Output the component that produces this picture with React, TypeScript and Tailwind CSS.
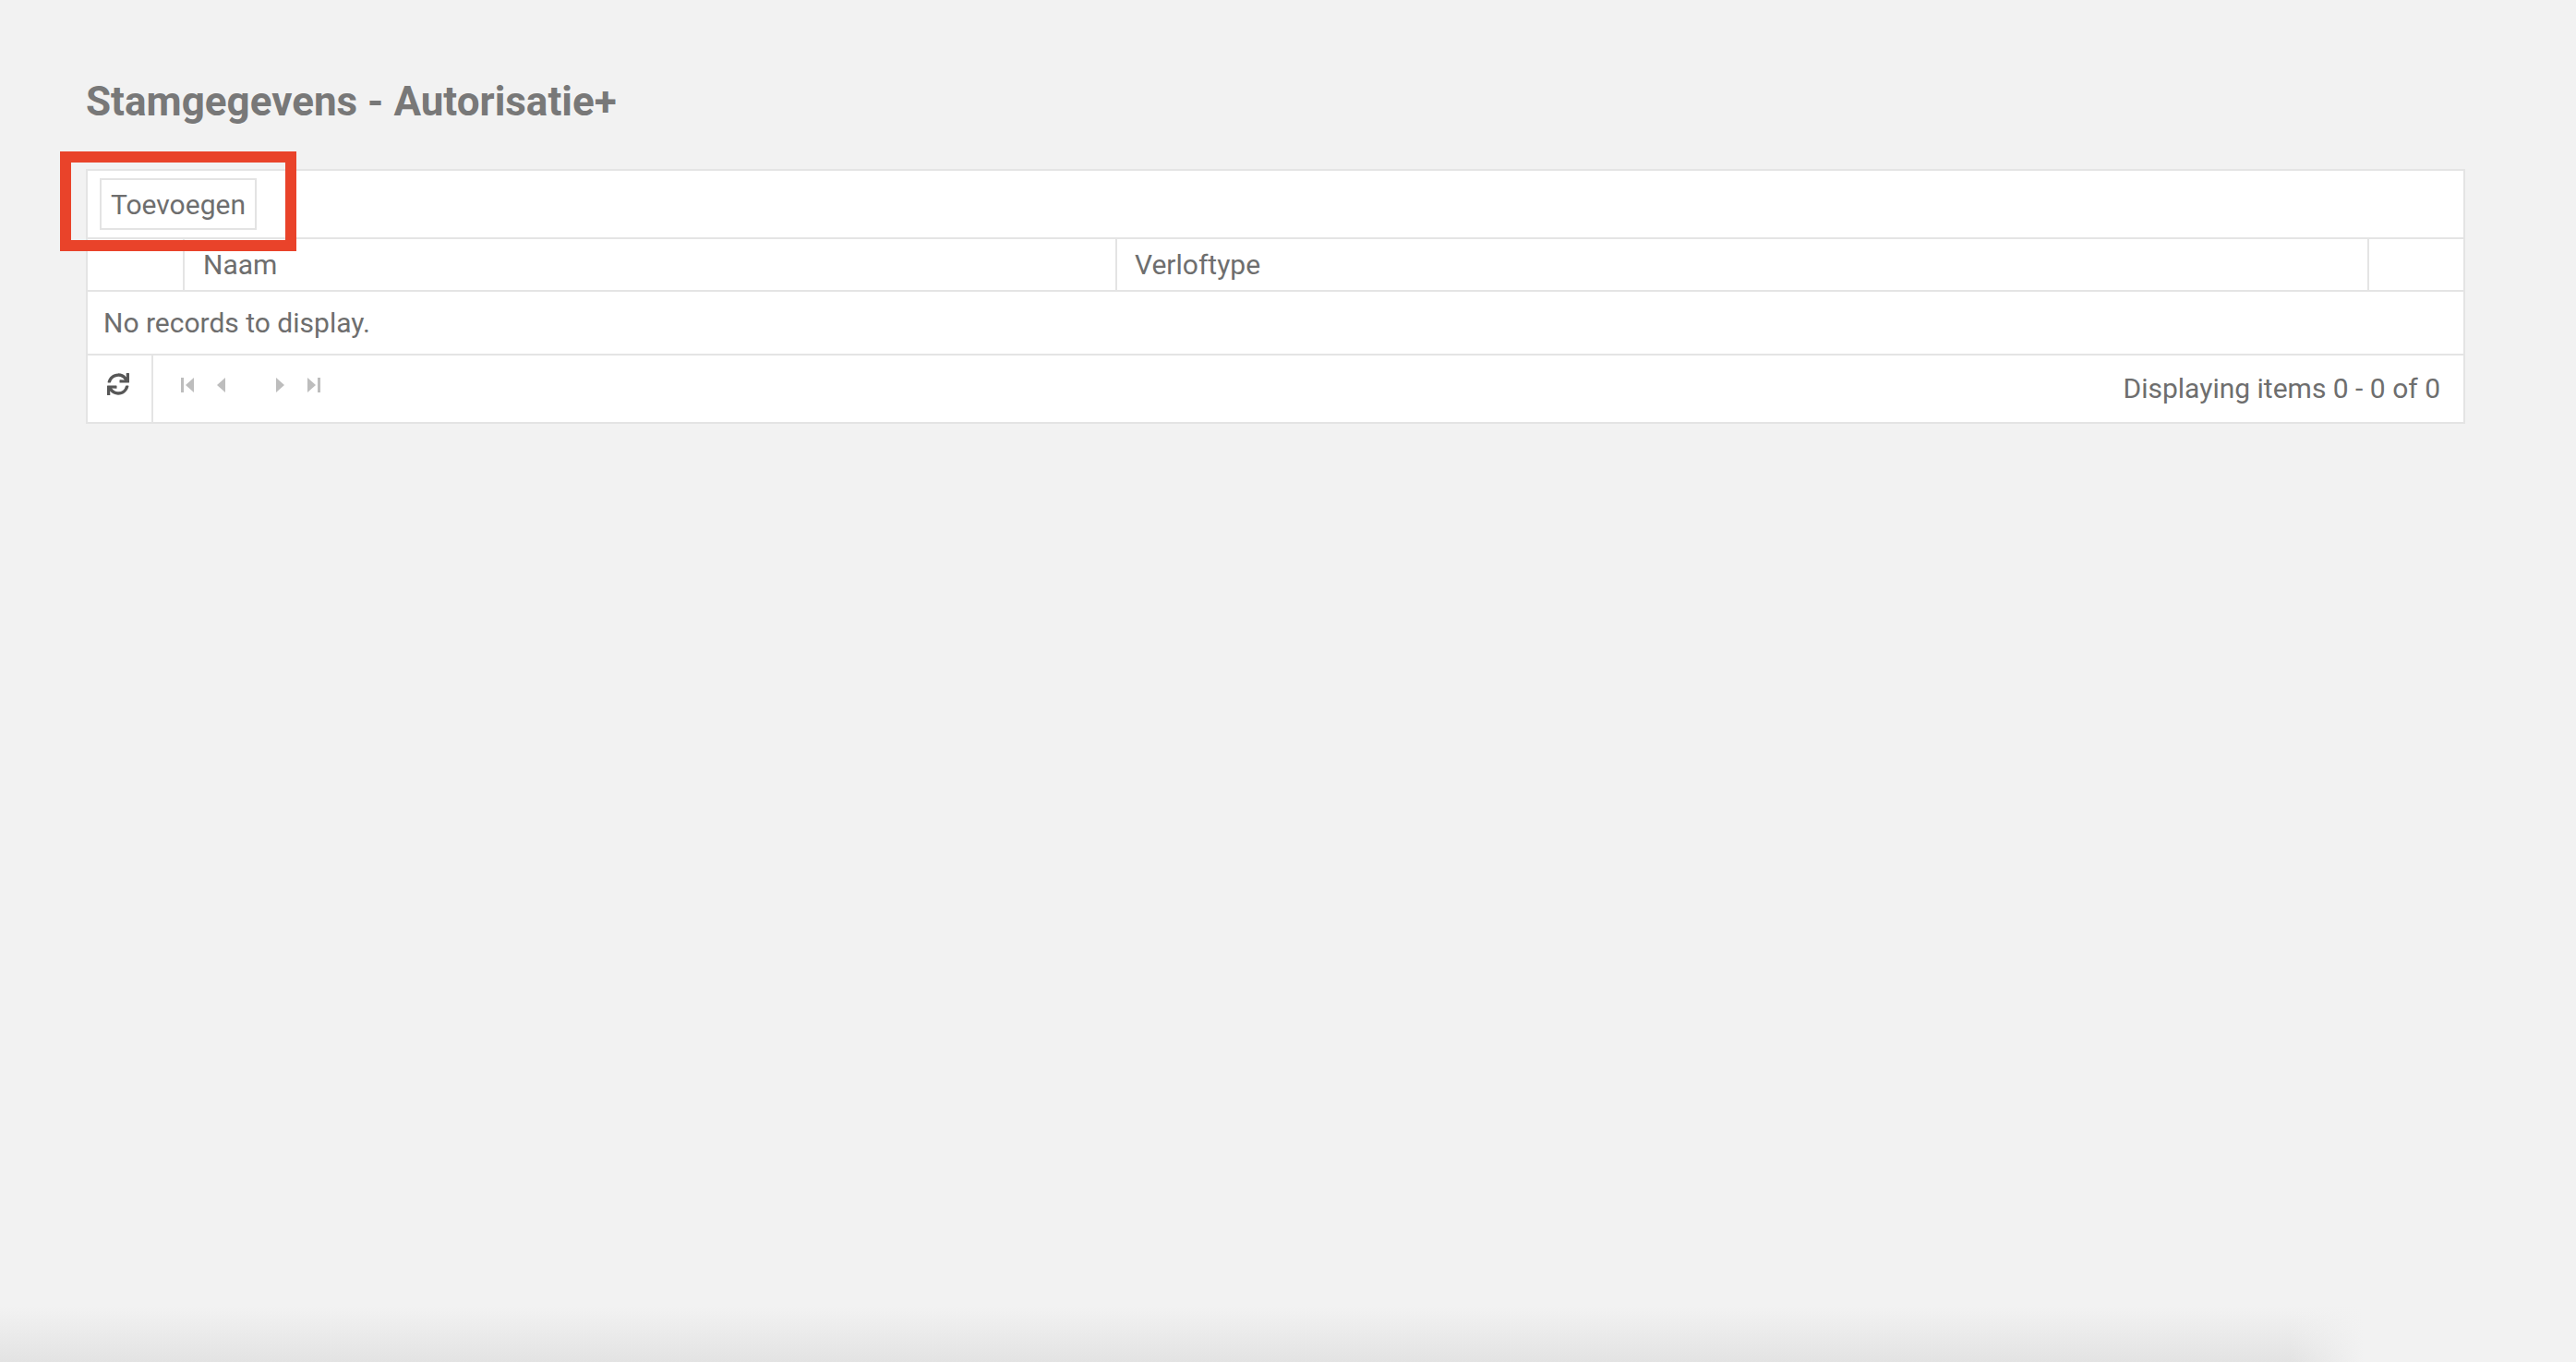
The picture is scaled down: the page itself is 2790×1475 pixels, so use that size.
import { FaSync } from 'react-icons/fa';

const font = { fontFamily: 'Roboto, "Liberation Sans", sans-serif' };

function PagerFirst() {
  return (
    <svg width="14" height="16" viewBox="0 0 14 16" className="fill-[#bdbdbd]">
      <rect x="0" y="0" width="3" height="16" />
      <path d="M14 0 L5 8 L14 16 Z" />
    </svg>
  );
}

function PagerPrev() {
  return (
    <svg width="9" height="16" viewBox="0 0 9 16" className="fill-[#bdbdbd]">
      <path d="M9 0 L0 8 L9 16 Z" />
    </svg>
  );
}

function PagerNext() {
  return (
    <svg width="9" height="16" viewBox="0 0 9 16" className="fill-[#bdbdbd]">
      <path d="M0 0 L9 8 L0 16 Z" />
    </svg>
  );
}

function PagerLast() {
  return (
    <svg width="14" height="16" viewBox="0 0 14 16" className="fill-[#bdbdbd]">
      <path d="M0 0 L9 8 L0 16 Z" />
      <rect x="11" y="0" width="3" height="16" />
    </svg>
  );
}

export default function App() {
  return (
    <div className="relative min-h-screen overflow-hidden bg-[#f2f2f2] text-[#6e6e6e]" style={font}>
      <div className="pl-[93px] pr-[120px] pt-[88px]">
        <h1 className="text-[44px] font-bold leading-none text-[#787878]">Stamgegevens - Autorisatie+</h1>

        <div className="relative mt-[51px] border-2 border-[#e4e4e4] bg-white">
          {/* toolbar */}
          <div className="flex h-[74px] items-start border-b-2 border-[#e4e4e4] pl-[13px] pt-[8px]">
            <button className="flex h-[56px] w-[170px] items-center justify-center border-2 border-[#e3e3e3] bg-white text-[30px] text-[#6e6e6e]">
              Toevoegen
            </button>
          </div>

          {/* header */}
          <div className="flex h-[57px] border-b-2 border-[#e4e4e4] text-[30px]">
            <div className="w-[105px] border-r-2 border-[#e4e4e4]" />
            <div className="flex w-[1010px] items-center border-r-2 border-[#e4e4e4] pl-[20px]">Naam</div>
            <div className="flex flex-1 items-center border-r-2 border-[#e4e4e4] pl-[19px]">Verloftype</div>
            <div className="w-[102px]" />
          </div>

          {/* body */}
          <div className="flex h-[69px] items-center border-b-2 border-[#e4e4e4] pl-[17px] text-[30px]">
            No records to display.
          </div>

          {/* paging */}
          <div className="flex h-[72px] items-center text-[30px]">
            <div className="flex h-full w-[71px] items-center justify-center border-r-2 border-[#e4e4e4] pb-[10px] pr-[3px]">
              <FaSync size={24} className="text-[#575757]" />
            </div>
            <div className="flex items-center pb-[8px] pl-[30px]">
              <PagerFirst />
              <span className="ml-[25px]"><PagerPrev /></span>
              <span className="ml-[55px]"><PagerNext /></span>
              <span className="ml-[25px]"><PagerLast /></span>
            </div>
            <div className="ml-auto pb-[2px] pr-[25px]">Displaying items 0 - 0 of 0</div>
          </div>

          {/* annotation */}
          <div className="pointer-events-none absolute left-[-30px] top-[-21px] h-[108px] w-[256px] border-[12px] border-[#e9432a]" />
        </div>
      </div>

      <div className="pointer-events-none absolute bottom-0 left-0 h-[60px] w-[2560px] bg-[linear-gradient(to_bottom,#f2f2f2,#e3e3e3)]" />
      <div className="pointer-events-none absolute bottom-0 left-[2480px] h-[60px] w-[80px] bg-gradient-to-r from-transparent to-[#f2f2f2]" />
    </div>
  );
}
